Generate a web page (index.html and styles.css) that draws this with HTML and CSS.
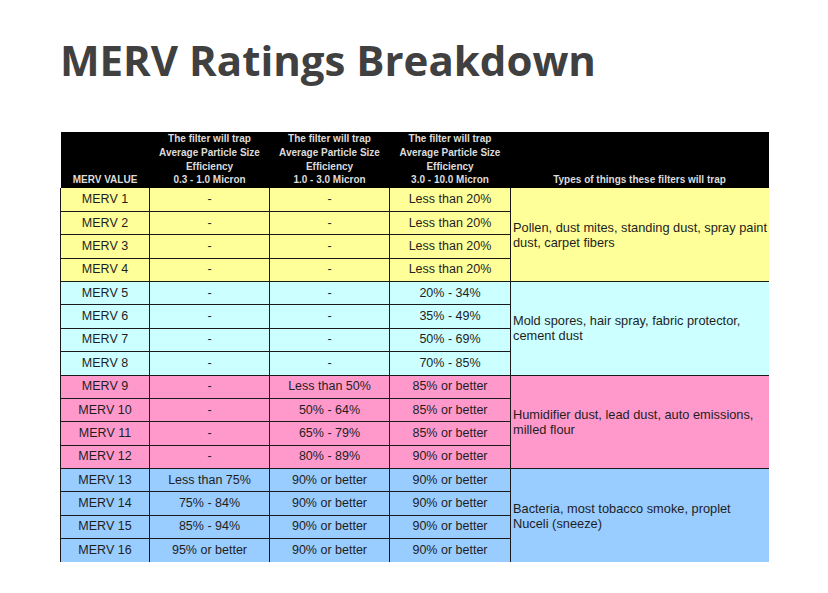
FILE: index.html
```html
<!DOCTYPE html>
<html>
<head>
<meta charset="utf-8">
<link rel="stylesheet" href="styles.css">
</head>
<body>
<div class="page">
  <h1 class="title">MERV Ratings Breakdown</h1>
  <table class="merv">
    <colgroup>
      <col class="c1"><col class="c2"><col class="c3"><col class="c4"><col class="c5">
    </colgroup>
    <thead>
      <tr>
        <th>MERV VALUE</th>
        <th>The filter will trap<br>Average Particle Size<br>Efficiency<br>0.3 - 1.0 Micron</th>
        <th>The filter will trap<br>Average Particle Size<br>Efficiency<br>1.0 - 3.0 Micron</th>
        <th>The filter will trap<br>Average Particle Size<br>Efficiency<br>3.0 - 10.0 Micron</th>
        <th class="types">Types of things these filters will trap</th>
      </tr>
    </thead>
    <tbody class="g-yellow">
      <tr><td>MERV 1</td><td>-</td><td>-</td><td>Less than 20%</td><td class="desc" rowspan="4">Pollen, dust mites, standing dust, spray paint<br>dust, carpet fibers</td></tr>
      <tr><td>MERV 2</td><td>-</td><td>-</td><td>Less than 20%</td></tr>
      <tr><td>MERV 3</td><td>-</td><td>-</td><td>Less than 20%</td></tr>
      <tr><td>MERV 4</td><td>-</td><td>-</td><td>Less than 20%</td></tr>
    </tbody>
    <tbody class="g-cyan">
      <tr><td>MERV 5</td><td>-</td><td>-</td><td>20% - 34%</td><td class="desc" rowspan="4">Mold spores, hair spray, fabric protector,<br>cement dust</td></tr>
      <tr><td>MERV 6</td><td>-</td><td>-</td><td>35% - 49%</td></tr>
      <tr><td>MERV 7</td><td>-</td><td>-</td><td>50% - 69%</td></tr>
      <tr><td>MERV 8</td><td>-</td><td>-</td><td>70% - 85%</td></tr>
    </tbody>
    <tbody class="g-pink">
      <tr><td>MERV 9</td><td>-</td><td>Less than 50%</td><td>85% or better</td><td class="desc" rowspan="4">Humidifier dust, lead dust, auto emissions,<br>milled flour</td></tr>
      <tr><td>MERV 10</td><td>-</td><td>50% - 64%</td><td>85% or better</td></tr>
      <tr><td>MERV 11</td><td>-</td><td>65% - 79%</td><td>85% or better</td></tr>
      <tr><td>MERV 12</td><td>-</td><td>80% - 89%</td><td>90% or better</td></tr>
    </tbody>
    <tbody class="g-blue">
      <tr><td>MERV 13</td><td>Less than 75%</td><td>90% or better</td><td>90% or better</td><td class="desc" rowspan="4">Bacteria, most tobacco smoke, proplet<br>Nuceli (sneeze)</td></tr>
      <tr><td>MERV 14</td><td>75% - 84%</td><td>90% or better</td><td>90% or better</td></tr>
      <tr><td>MERV 15</td><td>85% - 94%</td><td>90% or better</td><td>90% or better</td></tr>
      <tr class="last"><td>MERV 16</td><td>95% or better</td><td>90% or better</td><td>90% or better</td></tr>
    </tbody>
  </table>
</div>
</body>
</html>
```

FILE: styles.css
```css
html, body {
  margin: 0;
  padding: 0;
  background: #ffffff;
}

.page {
  padding: 31px 0 0 60px;
}

.title {
  margin: 0 0 44px 0;
  font-family: "Open Sans", "Liberation Sans", sans-serif;
  font-weight: 700;
  font-size: 42px;
  line-height: 57px;
  color: #404040;
  letter-spacing: 0;
}

.merv {
  border-collapse: collapse;
  table-layout: fixed;
  width: 708px;
  font-family: "Liberation Sans", Arial, sans-serif;
}

.c1 { width: 89px; }
.c2 { width: 120px; }
.c3 { width: 120px; }
.c4 { width: 121px; }
.c5 { width: 258px; }

.merv thead tr {
  height: 56px;
  background: #000000;
}

.merv th {
  padding: 0 0 1px 0;
  vertical-align: bottom;
  font-size: 10px;
  line-height: 13.7px;
  font-weight: 700;
  color: #dcdcdc;
  text-align: center;
  white-space: nowrap;
  border: none;
}

.merv tbody tr {
  height: 23.375px;
}

.merv td {
  padding: 0;
  font-size: 12.5px;
  line-height: 15px;
  color: #1e1e1e;
  text-align: center;
  white-space: nowrap;
  border-left: 1px solid #1a1a1a;
  border-bottom: 1px solid #1a1a1a;
}

.merv tr.last td {
  border-bottom: none;
}

.merv td.desc {
  text-align: left;
  padding-left: 2px;
  font-size: 12.8px;
  line-height: 15px;
  overflow: hidden;
  border-right: none;
}

.g-blue td.desc {
  border-bottom: none;
}

.g-yellow td { background: #ffff99; }
.g-cyan td { background: #ccffff; }
.g-pink td { background: #ff99cc; }
.g-blue td { background: #99ccff; }
```
